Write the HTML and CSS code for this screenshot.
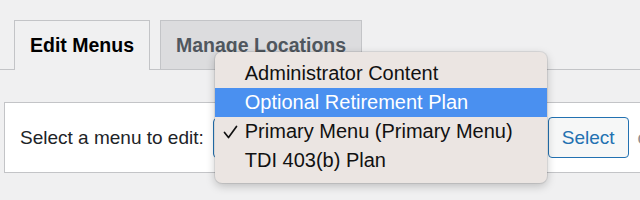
FILE: index.html
```html
<!DOCTYPE html>
<html lang="en">
<head>
    <meta charset="UTF-8">
    <title>Menus</title>
    <link rel="stylesheet" href="styles.css">
</head>
<body>
    <nav class="nav-tabs">
        <a href="#" class="nav-tab nav-tab-active">Edit Menus</a>
        <a href="#" class="nav-tab">Manage Locations</a>
    </nav>

    <div class="manage-menus">
        <label for="select-menu" class="menu-label">Select a menu to edit:</label>
        <div class="select-wrap">
            <div class="fake-select" id="select-menu"></div>
            <ul class="menu-popup">
                <li class="popup-item">Administrator Content</li>
                <li class="popup-item is-hover">Optional Retirement Plan</li>
                <li class="popup-item">
                    <svg class="check" width="15" height="14" viewBox="0 0 15 14">
                        <polyline points="1.5,7.5 5.5,12.5 13.5,1.5" fill="none" stroke="#111" stroke-width="1.7" stroke-linecap="round" stroke-linejoin="round"/>
                    </svg>
                    Primary Menu (Primary Menu)
                </li>
                <li class="popup-item">TDI 403(b) Plan</li>
            </ul>
        </div>
        <button class="button">Select</button>
        <span class="add-new">or create a new menu.</span>
    </div>
</body>
</html>
```

FILE: styles.css
```css
* {
    margin: 0;
    padding: 0;
    box-sizing: border-box;
}

html, body {
    height: 200px;
}

body {
    font-family: "Liberation Sans", Arial, sans-serif;
    background: #f0f0f1;
    color: #1d2327;
    overflow: hidden;
}

.nav-tabs {
    display: flex;
    gap: 10px;
    padding: 20px 0 0 14px;
    border-bottom: 1px solid #c3c4c7;
}

.nav-tab {
    display: flex;
    align-items: center;
    height: 49px;
    padding: 0 15px;
    border: 1px solid #c3c4c7;
    border-bottom: none;
    background: #dcdcde;
    color: #50575e;
    font-size: 19.5px;
    font-weight: bold;
    text-decoration: none;
}

.nav-tab-active {
    height: 50px;
    margin-bottom: -1px;
    padding-bottom: 1px;
    background: #f0f0f1;
    color: #000;
}

.manage-menus {
    display: flex;
    align-items: center;
    width: 760px;
    height: 71px;
    margin: 32px 0 0 4px;
    padding-left: 15px;
    background: #fff;
    border: 1px solid #c3c4c7;
    white-space: nowrap;
}

.menu-label {
    font-size: 19px;
    color: #1d2327;
}

.select-wrap {
    position: relative;
    margin-left: 9px;
}

.fake-select {
    width: 331px;
    height: 40px;
    border: 1px solid #2271b1;
    border-radius: 4px;
    background: #fff;
}

.menu-popup {
    position: absolute;
    top: -66px;
    left: 2px;
    width: 332px;
    padding: 7px 0 8px;
    list-style: none;
    background: #ebe5e2;
    border-radius: 7px;
    box-shadow: 0 3px 10px rgba(0,0,0,0.22), 0 0 0 1px rgba(0,0,0,0.08);
}

.popup-item {
    position: relative;
    height: 29px;
    line-height: 29px;
    padding-left: 30px;
    font-size: 20px;
    color: #111;
}

.popup-item.is-hover {
    background: #4a90f0;
    color: #fff;
}

.check {
    position: absolute;
    left: 8px;
    top: 8px;
}

.button {
    height: 41px;
    margin-left: 4px;
    padding: 0 13px;
    border: 1px solid #2271b1;
    border-radius: 4px;
    background: #f6f7f7;
    color: #2271b1;
    font-family: inherit;
    font-size: 19px;
}

.add-new {
    margin-left: 9px;
    font-size: 19px;
    color: #8c8f94;
}
```
